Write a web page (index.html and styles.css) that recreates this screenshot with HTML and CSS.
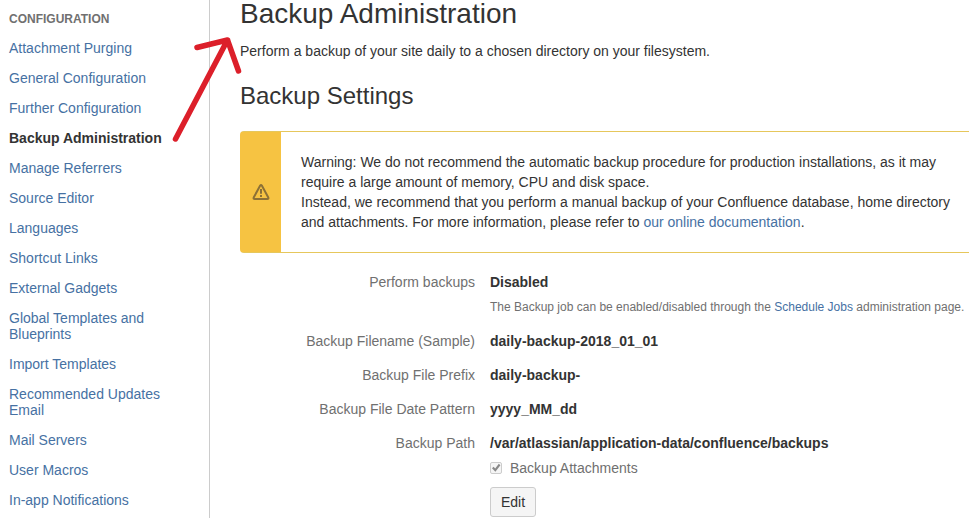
FILE: index.html
```html
<!DOCTYPE html>
<html lang="en">
<head>
<meta charset="utf-8">
<title>Backup Administration</title>
<link rel="stylesheet" href="styles.css">
</head>
<body>
<div class="page">
  <nav class="sidebar" aria-labelledby="nav-title">
    <h2 class="nav-title" id="nav-title">CONFIGURATION</h2>
    <ul class="nav-list">
      <li><a href="#">Attachment Purging</a></li>
      <li><a href="#">General Configuration</a></li>
      <li><a href="#">Further Configuration</a></li>
      <li><a href="#" class="current" aria-current="page">Backup Administration</a></li>
      <li><a href="#">Manage Referrers</a></li>
      <li><a href="#">Source Editor</a></li>
      <li><a href="#">Languages</a></li>
      <li><a href="#">Shortcut Links</a></li>
      <li><a href="#">External Gadgets</a></li>
      <li><a href="#">Global Templates and Blueprints</a></li>
      <li><a href="#">Import Templates</a></li>
      <li><a href="#">Recommended Updates Email</a></li>
      <li><a href="#">Mail Servers</a></li>
      <li><a href="#">User Macros</a></li>
      <li><a href="#">In-app Notifications</a></li>
    </ul>
  </nav>
  <main class="content">
    <h1 class="title">Backup Administration</h1>
    <p class="intro">Perform a backup of your site daily to a chosen directory on your filesystem.</p>
    <h2 class="subtitle">Backup Settings</h2>
    <div class="warning">
      <div class="warning-side">
        <svg width="18" height="18" viewBox="0 0 18 18" aria-hidden="true">
          <path d="M8.200 2.600 Q9 1.400 9.800 2.600 L16.300 14.500 Q16.800 16 15.300 16 H2.700 Q1.200 16 1.700 14.500 Z" fill="none" stroke="#8c7136" stroke-width="2" stroke-linejoin="round"/>
          <path d="M9 6 V10.800 M9 12 V14" fill="none" stroke="#8c7136" stroke-width="2"/>
        </svg>
      </div>
      <p class="warning-text">Warning: We do not recommend the automatic backup procedure for production installations, as it may require a large amount of memory, CPU and disk space.<br>Instead, we recommend that you perform a manual backup of your Confluence database, home directory and attachments. For more information, please refer to <a href="#">our online documentation</a>.</p>
    </div>
    <form class="settings">
      <dl class="fields">
        <dt>Perform backups</dt>
        <dd>
          <strong>Disabled</strong>
          <p class="help">The Backup job can be enabled/disabled through the <a href="#">Schedule Jobs</a> administration page.</p>
        </dd>
        <dt>Backup Filename (Sample)</dt>
        <dd><strong>daily-backup-2018_01_01</strong></dd>
        <dt>Backup File Prefix</dt>
        <dd><strong>daily-backup-</strong></dd>
        <dt>Backup File Date Pattern</dt>
        <dd><strong>yyyy_MM_dd</strong></dd>
        <dt>Backup Path</dt>
        <dd><strong>/var/atlassian/application-data/confluence/backups</strong></dd>
      </dl>
      <div class="actions">
        <div class="check">
          <input type="checkbox" id="attachments" checked disabled>
          <label for="attachments">Backup Attachments</label>
        </div>
        <button type="button" class="edit">Edit</button>
      </div>
    </form>
  </main>
  <svg class="arrow" width="80" height="110" viewBox="0 0 80 110" aria-hidden="true">
    <path d="M9.500 104 L61.500 5 M31 12.500 L61.500 5 L72.500 36" fill="none" stroke="#dc1f2a" stroke-width="5.500" stroke-linecap="round" stroke-linejoin="round"/>
  </svg>
</div>
</body>
</html>
```
FILE: styles.css
```css
* {
  box-sizing: border-box;
}

body {
  margin: 0;
  background: #fff;
  color: #333;
  font: 14px/20px "Liberation Sans", Arial, sans-serif;
}

h1, h2, p, ul, dl, dd {
  margin: 0;
}

a {
  color: #4671a3;
  text-decoration: none;
}

a:hover {
  text-decoration: underline;
}

.page {
  position: relative;
  display: grid;
  grid-template-columns: 210px minmax(0, 1fr);
  min-height: 100vh;
}

.sidebar {
  padding: 11px 40px 0 9px;
  border-right: 1px solid #ccc;
  line-height: 16px;
}

.nav-title {
  margin-bottom: 6px;
  color: #707070;
  font-size: 12px;
  line-height: 16px;
}

.nav-list {
  padding: 0;
  list-style: none;
}

.nav-list a {
  display: block;
  padding: 7px 0;
}

.nav-list .current {
  color: #333;
  font-weight: bold;
  white-space: nowrap;
}

.content {
  padding-left: 30px;
}

.title {
  font-size: 28px;
  font-weight: normal;
  line-height: 28px;
}

.intro {
  margin-top: 13px;
}

.subtitle {
  margin-top: 21px;
  font-size: 24px;
  font-weight: normal;
  line-height: 28px;
}

.warning {
  display: flex;
  margin-top: 21px;
  border: 1px solid #e6c75c;
  border-right: 0;
  border-left-color: #f6c342;
  border-radius: 4px 0 0 4px;
}

.warning-side {
  display: flex;
  flex: 0 0 40px;
  align-items: center;
  justify-content: center;
  background: #f6c342;
}

.warning-text {
  padding: 20px 10px 20px 20px;
}

.settings {
  margin-top: 19px;
}

.fields {
  display: grid;
  grid-template-columns: 235px minmax(0, 1fr);
  gap: 14px 15px;
}

.fields dt {
  color: #707070;
  text-align: right;
}

.help {
  margin-top: 5px;
  color: #707070;
  font-size: 12px;
}

.actions {
  margin: 5px 0 0 250px;
}

.check {
  display: flex;
  align-items: center;
  gap: 8px;
  color: #707070;
}

.check input {
  appearance: none;
  width: 12px;
  height: 12px;
  margin: 0;
  border: 1px solid #ccc;
  border-radius: 2px;
  background: #f5f5f5;
}

.check input:checked::before {
  content: "";
  display: block;
  height: 10px;
  background: #888;
  clip-path: polygon(10% 52%, 26% 38%, 42% 56%, 78% 8%, 94% 22%, 44% 88%);
}

.edit {
  height: 30px;
  margin-top: 9px;
  padding: 0 10px;
  border: 1px solid #ccc;
  border-radius: 3px;
  background: #f5f5f5;
  color: #333;
  font: inherit;
}

.arrow {
  position: absolute;
  top: 35px;
  left: 166px;
}
```
